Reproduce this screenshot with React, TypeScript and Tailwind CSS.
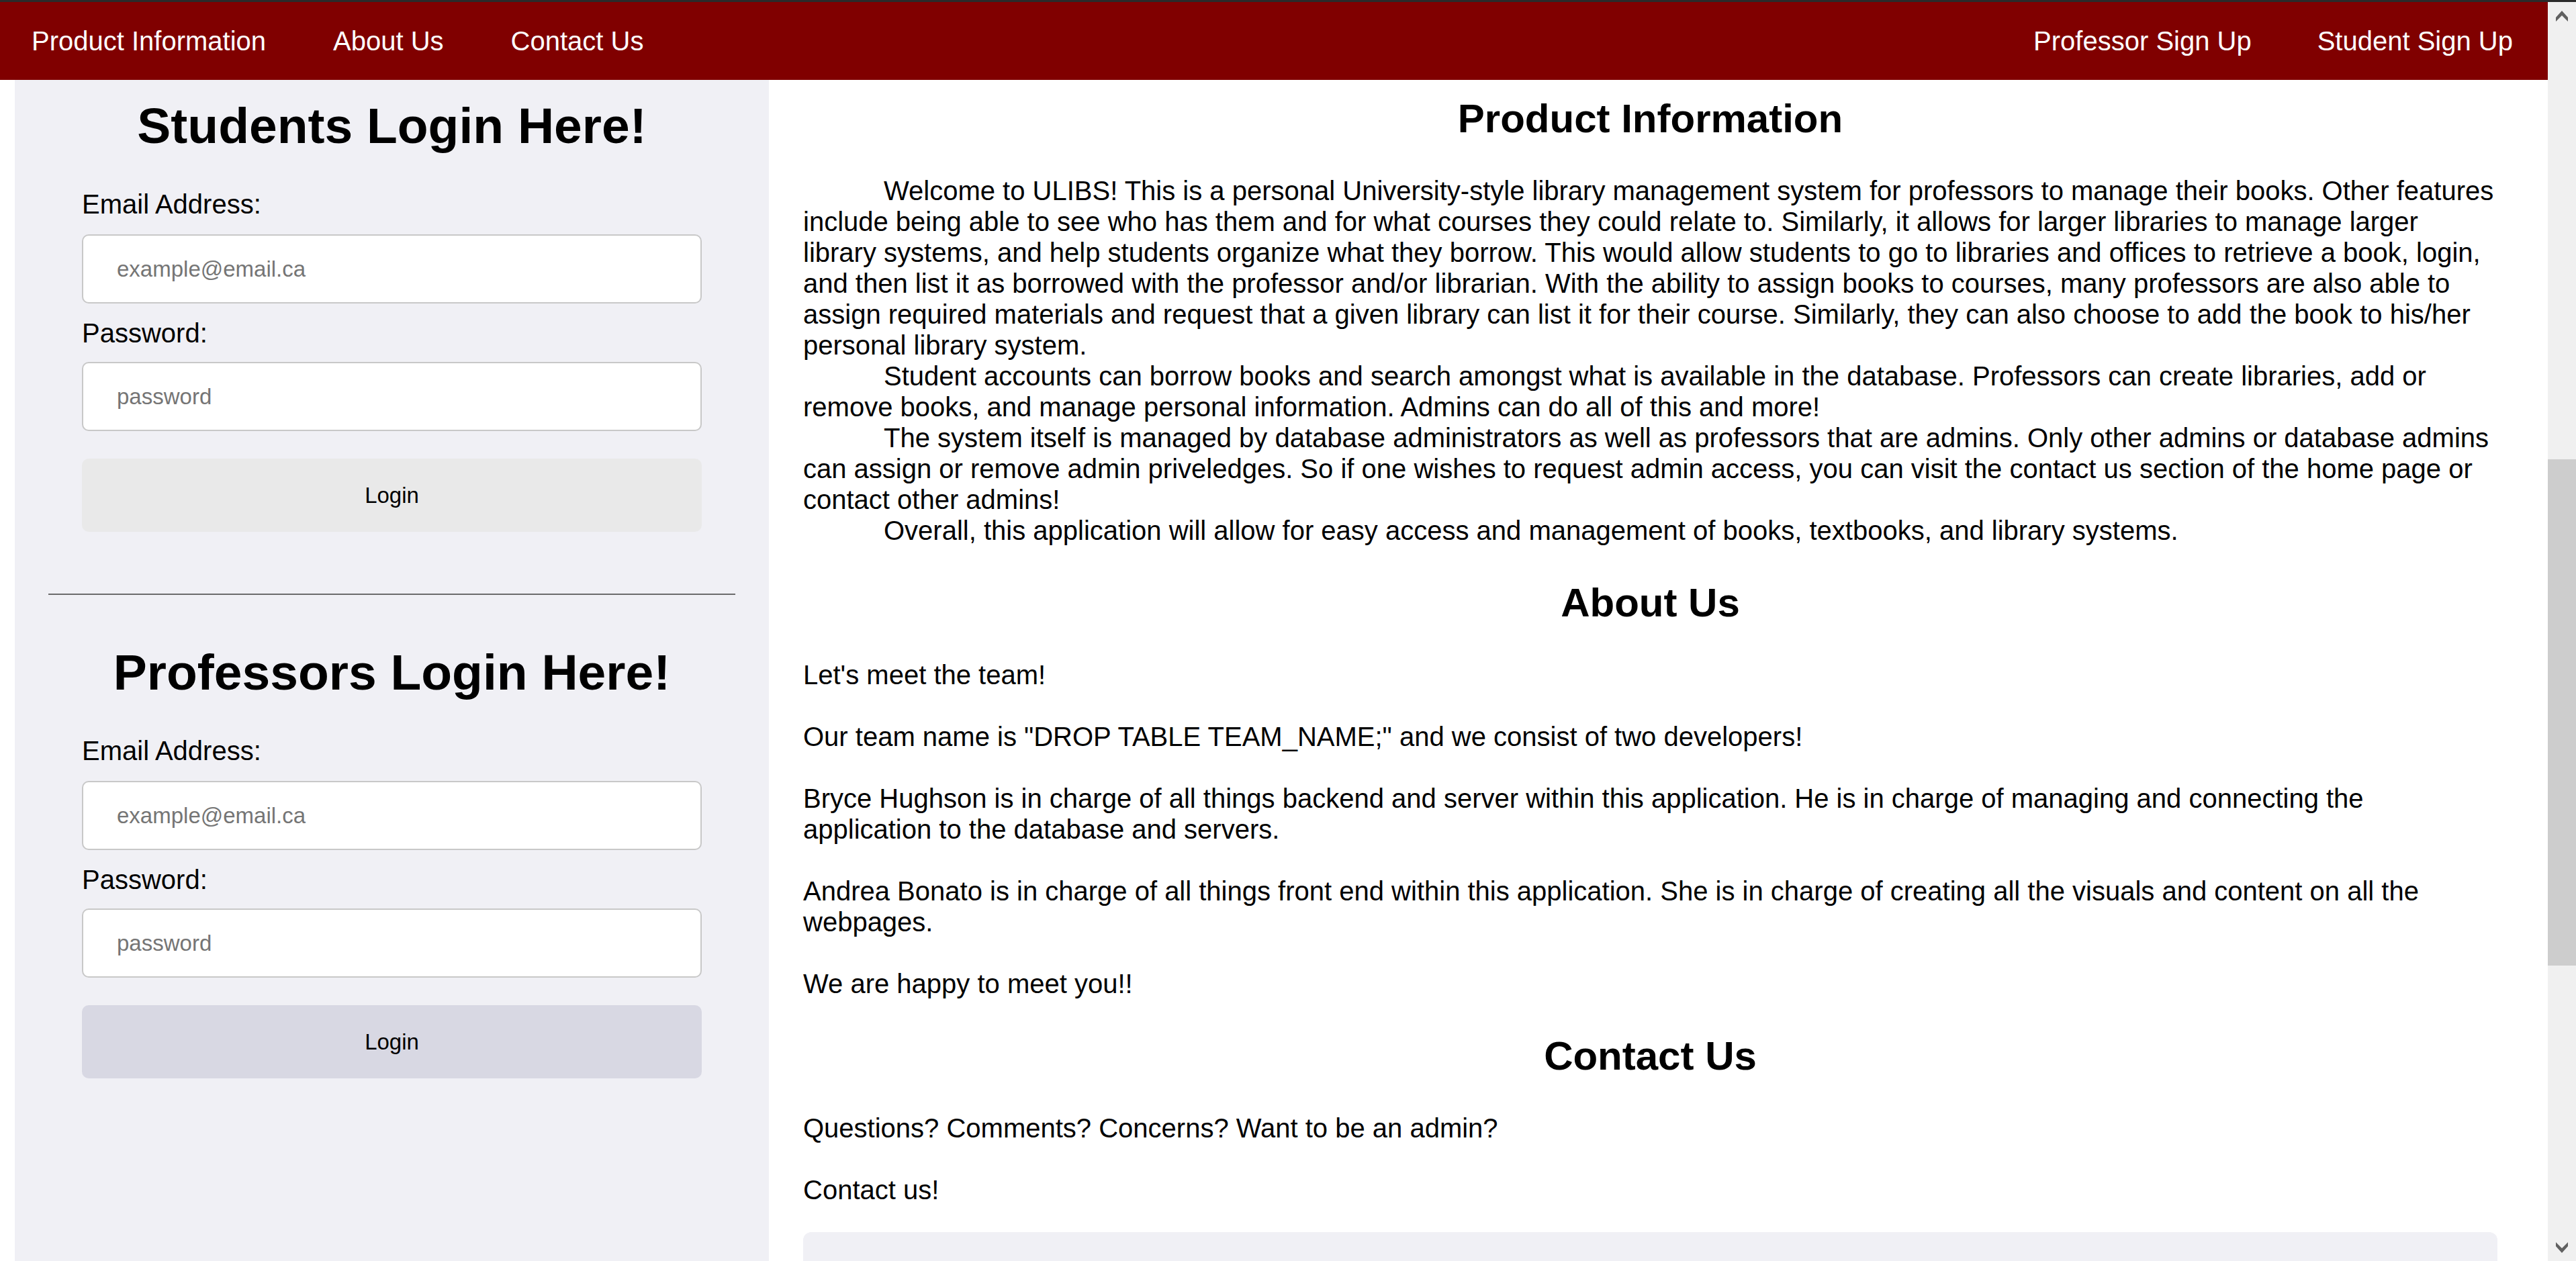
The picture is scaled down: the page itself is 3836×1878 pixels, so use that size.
import React from 'react';

const navLeft = ['Product Information', 'About Us', 'Contact Us'];
const navRight = ['Professor Sign Up', 'Student Sign Up'];

const productParas = [
    'Welcome to ULIBS! This is a personal University-style library management system for professors to manage their books. Other features include being able to see who has them and for what courses they could relate to. Similarly, it allows for larger libraries to manage larger library systems, and help students organize what they borrow. This would allow students to go to libraries and offices to retrieve a book, login, and then list it as borrowed with the professor and/or librarian. With the ability to assign books to courses, many professors are also able to assign required materials and request that a given library can list it for their course. Similarly, they can also choose to add the book to his/her personal library system.',
    'Student accounts can borrow books and search amongst what is available in the database. Professors can create libraries, add or remove books, and manage personal information. Admins can do all of this and more!',
    'The system itself is managed by database administrators as well as professors that are admins. Only other admins or database admins can assign or remove admin priveledges. So if one wishes to request admin access, you can visit the contact us section of the home page or contact other admins!',
    'Overall, this application will allow for easy access and management of books, textbooks, and library systems.',
];

const aboutParas = [
    "Let's meet the team!",
    'Our team name is "DROP TABLE TEAM_NAME;" and we consist of two developers!',
    'Bryce Hughson is in charge of all things backend and server within this application. He is in charge of managing and connecting the application to the database and servers.',
    'Andrea Bonato is in charge of all things front end within this application. She is in charge of creating all the visuals and content on all the webpages.',
    'We are happy to meet you!!',
];

interface LoginFormProps {
    title: string;
    buttonClass: string;
}

const LoginForm: React.FC<LoginFormProps> = ({ title, buttonClass }) => (
    <div className="flex flex-col">
        <h1 className="text-center text-[75px] leading-[86px] font-bold text-black">{title}</h1>
        <div className="px-[50px] mt-[51px] flex flex-col">
            <label className="text-[40px] leading-[46px] text-black">Email Address:</label>
            <input
                type="email"
                placeholder="example@email.ca"
                className="mt-[22px] h-[103px] w-full rounded-[10px] border-2 border-[#c8c8c8] bg-white pl-[50px] text-[33px] outline-none placeholder:text-[#757575]"
            />
            <label className="mt-[21px] text-[40px] leading-[46px] text-black">Password:</label>
            <input
                type="password"
                placeholder="password"
                className="mt-[20px] h-[103px] w-full rounded-[10px] border-2 border-[#c8c8c8] bg-white pl-[50px] text-[33px] outline-none placeholder:text-[#757575]"
            />
            <button className={`mt-[41px] h-[109px] w-full rounded-[10px] text-[33px] text-black ${buttonClass}`}>
                Login
            </button>
        </div>
    </div>
);

const Chevron: React.FC<{ down?: boolean }> = ({ down }) => (
    <svg width="18" height="16" viewBox="0 0 18 16" className={down ? 'rotate-180' : ''}>
        <polygon points="0,10 9,0 18,10 18,16 9,7 0,16" fill="#606060" />
    </svg>
);

const App: React.FC = () => {
    return (
        <div className="h-[1878px] w-full overflow-hidden flex flex-col bg-white font-['Liberation_Sans',Arial,sans-serif]">
            <div className="h-[3px] bg-[#2b2b2b] shrink-0" />
            <div className="flex flex-1 min-h-0">
                <div className="flex-1 min-w-0 flex flex-col">
                    {/* Navbar */}
                    <nav className="h-[116px] shrink-0 bg-[#800000] flex items-center justify-between text-white text-[40px] pl-[47px] pr-[52px]">
                        <div className="flex gap-[100px]">
                            {navLeft.map(item => (
                                <a key={item} href="#">{item}</a>
                            ))}
                        </div>
                        <div className="flex gap-[98px]">
                            {navRight.map(item => (
                                <a key={item} href="#">{item}</a>
                            ))}
                        </div>
                    </nav>

                    <div className="flex flex-1 min-h-0 pl-[22px]">
                        {/* Login panel */}
                        <aside className="w-[1123px] shrink-0 bg-[#f0f0f5] px-[50px] pt-[25px]">
                            <LoginForm title="Students Login Here!" buttonClass="bg-[#e9e9e9]" />
                            <div className="mt-[92px] h-[2px] bg-[#6b6b6b]" />
                            <div className="mt-[72px]">
                                <LoginForm title="Professors Login Here!" buttonClass="bg-[#d8d8e3]" />
                            </div>
                        </aside>

                        {/* Info column */}
                        <main className="ml-[51px] w-[2523px] shrink-0 pt-[23px] text-black text-[40px] leading-[46px]">
                            <h2 className="text-center text-[60px] leading-[69px] font-bold">Product Information</h2>
                            <div className="mt-[50px]">
                                {productParas.map((p, i) => (
                                    <p key={i} className="indent-[120px]">{p}</p>
                                ))}
                            </div>

                            <h2 className="mt-[50px] text-center text-[60px] leading-[69px] font-bold">About Us</h2>
                            <div className="mt-[50px] flex flex-col gap-[46px]">
                                {aboutParas.map((p, i) => (
                                    <p key={i}>{p}</p>
                                ))}
                            </div>

                            <h2 className="mt-[50px] text-center text-[60px] leading-[69px] font-bold">Contact Us</h2>
                            <div className="mt-[50px] flex flex-col gap-[46px]">
                                <p>Questions? Comments? Concerns? Want to be an admin?</p>
                                <p>Contact us!</p>
                            </div>
                            <div className="mt-[40px] h-[400px] rounded-[12px] bg-[#f0f0f5]" />
                        </main>
                    </div>
                </div>

                {/* Scrollbar */}
                <div className="w-[42px] shrink-0 bg-[#f0f0f0] flex flex-col">
                    <div className="h-[42px] flex items-center justify-center">
                        <Chevron />
                    </div>
                    <div className="mt-[639px] h-[754px] bg-[#cdcdcd]" />
                    <div className="flex-1" />
                    <div className="h-[40px] flex items-center justify-center">
                        <Chevron down />
                    </div>
                </div>
            </div>
        </div>
    );
};

export default App;
